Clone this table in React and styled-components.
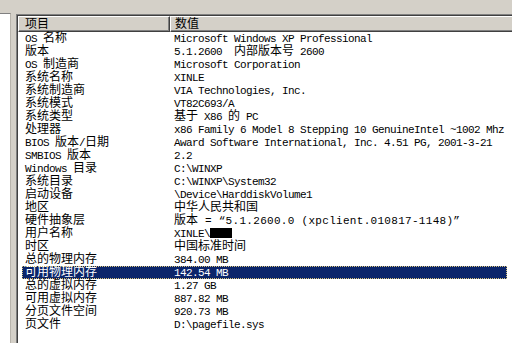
import React from 'react';
import styled, { createGlobalStyle } from 'styled-components';

const GlobalStyle = createGlobalStyle`
	html, body {
		margin: 0;
		padding: 0;
		background: #d4d0c8;
		overflow: hidden;
		font: 11px 'Liberation Mono', monospace;
	}
`;

const Window = styled.div`
	display: flex;
	flex-direction: column;
	width: 512px;
	height: 343px;
	background: #d4d0c8;
	overflow: hidden;
`;

const TopBand = styled.div`
	height: 13px;
	flex-shrink: 0;
`;

const Body = styled.div`
	display: flex;
	flex: 1;
	min-height: 0;
`;

const TreePane = styled.div`
	width: 10px;
	flex-shrink: 0;
	background: #fff;
	border-top: 1px solid #808080;
	border-right: 1px solid #b8b4ac;
`;

const Splitter = styled.div`
	width: 5px;
	flex-shrink: 0;
`;

const ListView = styled.div`
	flex: 1;
	margin-top: 1px;
	background: #fff;
	border-top: 1px solid #808080;
	border-left: 1px solid #808080;
	box-shadow: inset 1px 1px 0 #404040;
	padding: 1px 0 0 1px;
	display: flex;
	flex-direction: column;
	min-width: 0;
	overflow: hidden;
`;

const Header = styled.div`
	display: flex;
	height: 16px;
	flex-shrink: 0;
`;

const HeaderCell = styled.div`
	box-sizing: border-box;
	flex: 0 0 ${p => p.$width}px;
	height: 16px;
	padding: 1px 0 0 ${p => p.$pad}px;
	background: #d4d0c8;
	border-top: 1px solid #fff;
	border-left: 1px solid #fff;
	border-right: 1px solid #404040;
	border-bottom: 1px solid #404040;
	box-shadow: inset -1px -1px 0 #808080;
	line-height: 13px;
	white-space: nowrap;
	color: #000;
`;

const Rows = styled.div`
	display: flex;
	flex-direction: column;
	padding-left: 4px;
`;

const Row = styled.div`
	display: flex;
	width: 485px;
	height: 13px;
	line-height: 13px;
	white-space: nowrap;
	color: ${p => (p.$selected ? '#fff' : '#000')};
	background: ${p => (p.$selected ? '#0a246a' : 'transparent')};
	outline: ${p => (p.$selected ? '1px dotted #d8c27a' : 'none')};
	outline-offset: -1px;
`;

const Label = styled.div`
	width: 149px;
	height: 13px;
	padding-left: 3px;
	flex-shrink: 0;
`;

const Value = styled.div`
	flex: 1;
	height: 13px;
`;

// both runs are 13px boxes; line-height puts the baseline 10px down in each font
const Latin = styled.span`
	display: inline-block;
	vertical-align: top;
	height: 13px;
	font-family: 'Liberation Mono', monospace;
	font-size: 11px;
	line-height: 14.2px;
	letter-spacing: ${p => (p.$spread ? '0.3px' : '-0.6px')};
	white-space: pre;
`;

const Han = styled.span`
	display: inline-block;
	vertical-align: top;
	height: 13px;
	font-family: 'Noto Sans CJK SC', sans-serif;
	font-size: 12px;
	line-height: 9.6px;
	white-space: pre;
`;

const Redact = styled.span`
	display: inline-block;
	vertical-align: top;
	width: 22px;
	height: 10px;
	margin-top: 1px;
	background: #000;
`;

const rows = [
	{ label: 'OS 名称', value: 'Microsoft Windows XP Professional' },
	{ label: '版本', value: '5.1.2600  内部版本号 2600' },
	{ label: 'OS 制造商', value: 'Microsoft Corporation' },
	{ label: '系统名称', value: 'XINLE' },
	{ label: '系统制造商', value: 'VIA Technologies, Inc.' },
	{ label: '系统模式', value: 'VT82C693/A' },
	{ label: '系统类型', value: '基于 X86 的 PC' },
	{ label: '处理器', value: 'x86 Family 6 Model 8 Stepping 10 GenuineIntel ~1002 Mhz' },
	{ label: 'BIOS 版本/日期', value: 'Award Software International, Inc. 4.51 PG, 2001-3-21' },
	{ label: 'SMBIOS 版本', value: '2.2' },
	{ label: 'Windows 目录', value: 'C:\\WINXP' },
	{ label: '系统目录', value: 'C:\\WINXP\\System32' },
	{ label: '启动设备', value: '\\Device\\HarddiskVolume1' },
	{ label: '地区', value: '中华人民共和国' },
	{ label: '硬件抽象层', value: '版本 = “5.1.2600.0 (xpclient.010817-1148)”', spread: true },
	{ label: '用户名称', value: 'XINLE\\', redacted: true },
	{ label: '时区', value: '中国标准时间' },
	{ label: '总的物理内存', value: '384.00 MB' },
	{ label: '可用物理内存', value: '142.54 MB', selected: true },
	{ label: '总的虚拟内存', value: '1.27 GB' },
	{ label: '可用虚拟内存', value: '887.82 MB' },
	{ label: '分页文件空间', value: '920.73 MB' },
	{ label: '页文件', value: 'D:\\pagefile.sys' },
];

const HAN = /([\u3000-\u9fff\uff00-\uffef]+)/;

// split into CJK and latin runs so latin keeps the half-width grid
function Text({ children, spread }) {
	const parts = children.split(HAN).filter(Boolean);
	return parts.map((part, i) =>
		HAN.test(part) ? (
			<Han key={i}>{part}</Han>
		) : (
			<Latin key={i} $spread={spread}>
				{part}
			</Latin>
		)
	);
}

function App() {
	return (
		<Window>
			<GlobalStyle />
			<TopBand />
			<Body>
				<TreePane />
				<Splitter />
				<ListView>
					<Header>
						<HeaderCell $width={152} $pad={6}>
							<Text>项目</Text>
						</HeaderCell>
						<HeaderCell $width={420} $pad={4}>
							<Text>数值</Text>
						</HeaderCell>
					</Header>
					<Rows>
						{rows.map(row => (
							<Row key={row.label} $selected={row.selected}>
								<Label>
									<Text>{row.label}</Text>
								</Label>
								<Value>
									<Text spread={row.spread}>{row.value}</Text>
									{row.redacted && <Redact />}
								</Value>
							</Row>
						))}
					</Rows>
				</ListView>
			</Body>
		</Window>
	);
}

export default App;
